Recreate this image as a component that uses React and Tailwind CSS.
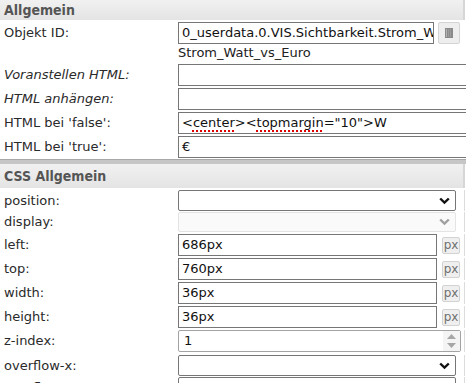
import React from "react";

function Chevron({ disabled }) {
  return (
    <svg width="11" height="8" viewBox="0 0 11 8" className="shrink-0">
      <path d="M1.2 1.5 L5.5 5.6 L9.8 1.5" fill="none" stroke={disabled ? "#a0a0a0" : "#111"} strokeWidth="2.4" />
    </svg>
  );
}

function Header({ title, h, mt }) {
  return (
    <div className={`flex w-[466px] ${h} ${mt}`}>
      <div className="w-[463px] shrink-0 flex items-center pl-[4px] bg-gradient-to-b from-[#f1f1f1] to-[#e4e4e4] font-['DejaVu_Sans_Condensed','DejaVu_Sans',sans-serif] font-bold text-[14px] text-[#555]">
        {title}
      </div>
      <div className="w-[2px] bg-[#d6d6d6]" />
    </div>
  );
}

function Label({ children, italic }) {
  return (
    <div className={`w-[178px] shrink-0 pl-[4px] whitespace-nowrap ${italic ? "italic" : ""}`}>{children}</div>
  );
}

function RightLine() {
  return <div className="ml-auto w-[2px] self-stretch border-l border-[#dcdcdc]" />;
}

function TextBox({ children }) {
  return (
    <div className="w-[300px] h-[22px] shrink-0 border border-[#767676] bg-white flex items-center pl-[3px] whitespace-nowrap overflow-hidden text-[#111]">
      {children}
    </div>
  );
}

function PxRow({ label, value, h = "h-[22px]", mt = "mt-[2px]" }) {
  return (
    <div className={`flex items-center w-[466px] ${h} ${mt}`}>
      <Label>{label}</Label>
      <div className="w-[259px] h-full shrink-0 border border-[#767676] flex items-center pl-[3px] text-[#111]">{value}</div>
      <div className="ml-[5px] w-[18px] h-[17px] shrink-0 border border-[#d2d2d2] bg-[#efefef] rounded-[2px] flex items-center justify-center text-[12px] text-[#707070] leading-none">px</div>
      <RightLine />
    </div>
  );
}

function SelectRow({ label, disabled, h = "h-[21px]", mt = "mt-[2px]" }) {
  return (
    <div className={`flex items-center w-[466px] ${h} ${mt}`}>
      <Label>{label}</Label>
      <div className={`w-[278px] h-full shrink-0 rounded-[2px] flex items-center justify-end pr-[5px] border ${disabled ? "border-[#e4e4e4] bg-[#fafafa]" : "border-[#767676] bg-white"}`}>
        <Chevron disabled={disabled} />
      </div>
      <RightLine />
    </div>
  );
}

export default function App() {
  const spell = "underline decoration-dotted decoration-[#e00000] decoration-[2px] underline-offset-[3px]";
  return (
    <div className="w-[466px] h-[383px] overflow-hidden bg-white text-[13px] leading-[16px] text-[#2a2a2a] font-['DejaVu_Sans',sans-serif]">
      <Header title="Allgemein" h="h-[20px]" mt="" />

      {/* Objekt ID */}
      <div className="flex items-center w-[466px] h-[22px] mt-[2px]">
        <Label>Objekt ID:</Label>
        <div className="w-[256px] h-full shrink-0 border border-[#767676] flex items-center pl-[3px] whitespace-nowrap overflow-hidden text-[#111]">
          0_userdata.0.VIS.Sichtbarkeit.Strom_Watt_vs_Euro
        </div>
        <div className="ml-[4px] w-[22px] h-[22px] shrink-0 border border-[#d4d4d4] bg-[#eeeeee] rounded-[2px] flex items-center justify-center">
          <svg width="8" height="10" viewBox="0 0 8 10">
            <rect x="0" y="0" width="8" height="10" fill="#8a8a8a" />
            <rect x="1" y="1" width="1" height="8" fill="#b5b5b5" />
            <rect x="3" y="1" width="1" height="8" fill="#9c9c9c" />
            <rect x="5" y="1" width="1" height="8" fill="#9c9c9c" />
          </svg>
        </div>
      </div>

      {/* Strom text */}
      <div className="flex items-center w-[466px] h-[16px] mt-[1px]">
        <Label></Label>
        <div className="text-[#222] whitespace-nowrap">Strom_Watt_vs_Euro</div>
      </div>

      <div className="flex items-center w-[466px] h-[22px] mt-[3px]">
        <Label italic>Voranstellen HTML:</Label>
        <TextBox />
      </div>
      <div className="flex items-center w-[466px] h-[22px] mt-[2px]">
        <Label italic>HTML anhängen:</Label>
        <TextBox />
      </div>
      <div className="flex items-center w-[466px] h-[22px] mt-[2px]">
        <Label>HTML bei 'false':</Label>
        <TextBox>
          &lt;<span className={spell}>center</span>&gt;&lt;<span className={spell}>topmargin</span>="10"&gt;W
        </TextBox>
      </div>
      <div className="flex items-center w-[466px] h-[22px] mt-[2px]">
        <Label>HTML bei 'true':</Label>
        <TextBox>€</TextBox>
      </div>

      {/* separator */}
      <div className="w-[466px] h-[5px] mt-[1px] border-t border-[#a8a8a8] bg-[#c6c6c6]" />

      <Header title="CSS Allgemein" h="h-[24px]" mt="" />

      <SelectRow label="position:" h="h-[21px]" mt="mt-[2px]" />
      <SelectRow label="display:" disabled h="h-[20px]" mt="mt-[1px]" />
      <PxRow label="left:" value="686px" mt="mt-[2px]" />
      <PxRow label="top:" value="760px" mt="mt-[2px]" />
      <PxRow label="width:" value="36px" mt="mt-[2px]" />
      <PxRow label="height:" value="36px" mt="mt-[2px]" />

      {/* z-index */}
      <div className="flex items-center w-[466px] h-[22px] mt-[2px]">
        <Label>z-index:</Label>
        <div className="w-[283px] h-full shrink-0 border border-[#a3a3a3] rounded-[2px] flex items-center pl-[5px] text-[#111]">
          <span className="flex-1">1</span>
          <div className="w-[17px] h-full flex flex-col items-center justify-center gap-[4px] bg-[#f4f4f4]">
            <svg width="9" height="5" viewBox="0 0 9 5"><path d="M0 5 L4.5 0 L9 5 Z" fill="#a6a6a6" /></svg>
            <svg width="9" height="5" viewBox="0 0 9 5"><path d="M0 0 L4.5 5 L9 0 Z" fill="#a6a6a6" /></svg>
          </div>
        </div>
        <RightLine />
      </div>

      <SelectRow label="overflow-x:" h="h-[21px]" mt="mt-[3px]" />
      <SelectRow label="overflow-y:" h="h-[21px]" mt="mt-[1px]" />
    </div>
  );
}
